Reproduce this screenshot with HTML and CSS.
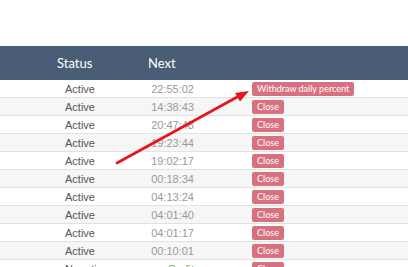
FILE: index.html
```html
<!DOCTYPE html>
<html lang="en">
<head>
  <meta charset="UTF-8">
  <title>Deposits</title>
  <link rel="stylesheet" href="styles.css">
</head>
<body>
  <div class="page">
    <div class="table">
      <div class="row head">
        <div class="c-id"></div>
        <div class="c-status">Status</div>
        <div class="c-next">Next</div>
        <div class="c-act"></div>
      </div>
      <div class="row">
        <div class="c-id"></div><div class="c-status">Active</div><div class="c-next">22:55:02</div>
        <div class="c-act"><button>Withdraw daily percent</button></div>
      </div>
      <div class="row">
        <div class="c-id"></div><div class="c-status">Active</div><div class="c-next">14:38:43</div>
        <div class="c-act"><button>Close</button></div>
      </div>
      <div class="row">
        <div class="c-id"></div><div class="c-status">Active</div><div class="c-next">20:47:48</div>
        <div class="c-act"><button>Close</button></div>
      </div>
      <div class="row">
        <div class="c-id"></div><div class="c-status">Active</div><div class="c-next">19:23:44</div>
        <div class="c-act"><button>Close</button></div>
      </div>
      <div class="row">
        <div class="c-id"></div><div class="c-status">Active</div><div class="c-next">19:02:17</div>
        <div class="c-act"><button>Close</button></div>
      </div>
      <div class="row">
        <div class="c-id"></div><div class="c-status">Active</div><div class="c-next">00:18:34</div>
        <div class="c-act"><button>Close</button></div>
      </div>
      <div class="row">
        <div class="c-id"></div><div class="c-status">Active</div><div class="c-next">04:13:24</div>
        <div class="c-act"><button>Close</button></div>
      </div>
      <div class="row">
        <div class="c-id"></div><div class="c-status">Active</div><div class="c-next">04:01:40</div>
        <div class="c-act"><button>Close</button></div>
      </div>
      <div class="row">
        <div class="c-id"></div><div class="c-status">Active</div><div class="c-next">04:01:17</div>
        <div class="c-act"><button>Close</button></div>
      </div>
      <div class="row">
        <div class="c-id"></div><div class="c-status">Active</div><div class="c-next">00:10:01</div>
        <div class="c-act"><button>Close</button></div>
      </div>
      <div class="row">
        <div class="c-id"></div><div class="c-status">Negative</div><div class="c-next green">Profit</div>
        <div class="c-act"><button>Close</button></div>
      </div>
    </div>

    <!-- annotation arrow -->
    <svg class="arrow" width="408" height="267" viewBox="0 0 408 267">
      <line x1="117" y1="163" x2="239" y2="96" stroke="#e8141c" stroke-width="2.6" stroke-linecap="round"/>
      <polygon points="249,91 240,101.5 235,93" fill="#e8141c"/>
    </svg>
  </div>
</body>
</html>
```

FILE: styles.css
```css
body { margin: 0; background: #fff; font-family: "Liberation Sans", Arial, sans-serif; overflow: hidden; }
.page { position: relative; width: 408px; height: 267px; overflow: hidden; }
.table { padding-top: 46px; }
.row { display: grid; grid-template-columns: 57px 73px 70px 1fr; height: 18px; box-sizing: border-box; border-bottom: 1px solid #e2e2e2; align-items: center; font-size: 11px; color: #555; }
.row:nth-child(odd) { background: #f6f6f6; }
.row.head { height: 34px; background: #4a5d76; border-bottom: none; color: #fff; font-family: Lato, sans-serif; font-size: 13px; }
.row.head .c-status { padding-left: 0; }
.row.head .c-next { padding-left: 18px; text-align: left; color: #fff; }
.c-status { padding-left: 8px; }
.c-next { text-align: right; padding-right: 6px; color: #999; }
.c-next.green { color: #6fbf5a; }
.c-act { padding-left: 52px; display: flex; }
button { font-family: Lato, sans-serif; font-size: 9px; color: #fff; background: #d8717f; border: none; border-radius: 2px; height: 14px; padding: 0 5px; line-height: 14px; }
.arrow { position: absolute; left: 0; top: 0; pointer-events: none; }
```
